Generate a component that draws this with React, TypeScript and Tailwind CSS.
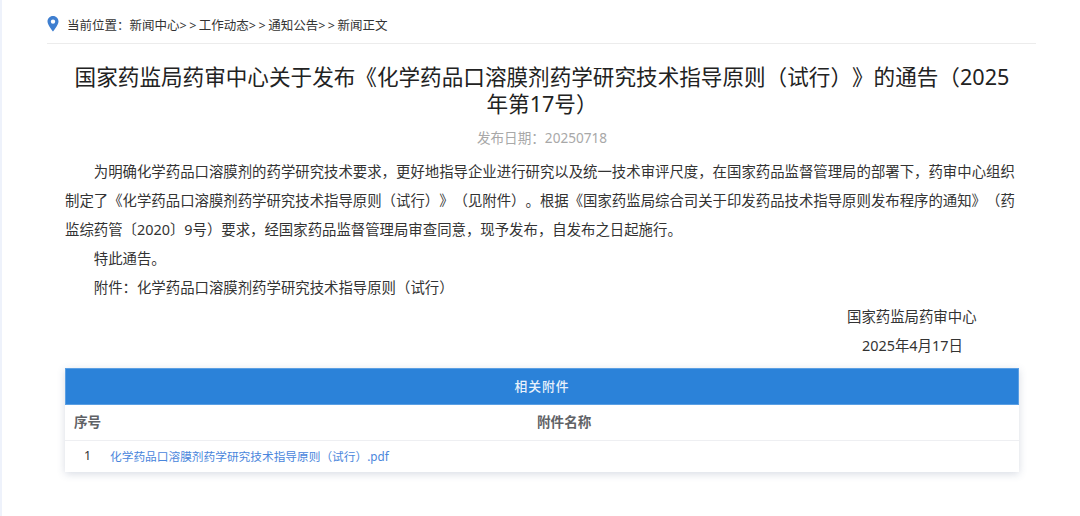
export default function App() {
  return (
    <div className="h-[516px] w-[1080px] overflow-hidden bg-white pl-[47px] border-l-2 border-[#eef2fb] font-['Noto_Sans','Noto_Sans_CJK_SC',sans-serif] [text-spacing-trim:space-all]">
      <div className="w-[989px] -ml-[2px]">
        <div className="flex h-[44px] items-center border-b border-[#ececec] pt-[9px]">
          <svg width="12" height="16" viewBox="0 0 12 16" className="mb-[5px]">
            <path fillRule="evenodd" d="M6 0C2.7 0 .5 2.500.5 5.500.5 9 6 15.500 6 15.500S11.500 9 11.500 5.500C11.500 2.500 9.300 0 6 0Zm0 3.400a2.200 2.200 0 1 1 0 4.400 2.200 2.200 0 0 1 0-4.400Z" fill="#3f7fd0" />
          </svg>
          <span className="ml-[8px] text-[12.5px] leading-[16px] text-[#333]">
            当前位置：新闻中心<span className="tracking-[2.500px]">&gt;&gt;</span>工作动态<span className="tracking-[2.500px]">&gt;&gt;</span>通知公告<span className="tracking-[2.500px]">&gt;&gt;</span>新闻正文
          </span>
        </div>
        <div className="pl-[18px] pr-[17px]">
          <h1 className="mt-[19px] text-center text-[21.600px] font-normal leading-[27px] text-[#222]">国家药监局药审中心关于发布《化学药品口溶膜剂药学研究技术指导原则（试行）》的通告（2025年第17号）</h1>
          <p className="mt-[11px] text-center text-[13.600px] font-normal leading-[20px] text-[#a8a8a8]">发布日期：20250718</p>
          <div className="mt-[9px] pr-[1px] text-[14.400px] leading-[29px] text-[#333]">
            <p className="indent-[28.800px]">为明确化学药品口溶膜剂的药学研究技术要求，更好地指导企业进行研究以及统一技术审评尺度，在国家药品监督管理局的部署下，药审中心组织制定了《化学药品口溶膜剂药学研究技术指导原则（试行）》（见附件）。根据《国家药监局综合司关于印发药品技术指导原则发布程序的通知》（药监综药管〔2020〕9号）要求，经国家药品监督管理局审查同意，现予发布，自发布之日起施行。</p>
            <p className="indent-[28.800px]">特此通告。</p>
            <p className="indent-[28.800px]">附件：化学药品口溶膜剂药学研究技术指导原则（试行）</p>
            <p className="pl-[782px]">国家药监局药审中心</p>
            <p className="pl-[797px]">2025年4月17日</p>
          </div>
          <div className="mt-[8px] shadow-[0_2px_8px_rgba(60,80,120,0.2)]">
            <div className="flex h-[37px] items-center justify-center border border-[#5b9fe3] bg-[#2b82d9] text-[12.800px] font-medium tracking-[1px] text-[#e8f1fb]">相关附件</div>
            <div className="flex h-[36px] items-center border-b border-[#eeeff2] bg-white text-[13.600px] font-semibold text-[#606266]">
              <span className="w-[472px] pl-[9px]">序号</span>
              <span>附件名称</span>
            </div>
            <div className="flex h-[31px] items-center bg-white text-[11.700px]">
              <span className="w-[45px] pl-[19px] text-[12.500px] text-[#333]">1</span>
              <span className="text-[#4a86dc]">化学药品口溶膜剂药学研究技术指导原则（试行）.pdf</span>
            </div>
          </div>
        </div>
      </div>
    </div>
  );
}
